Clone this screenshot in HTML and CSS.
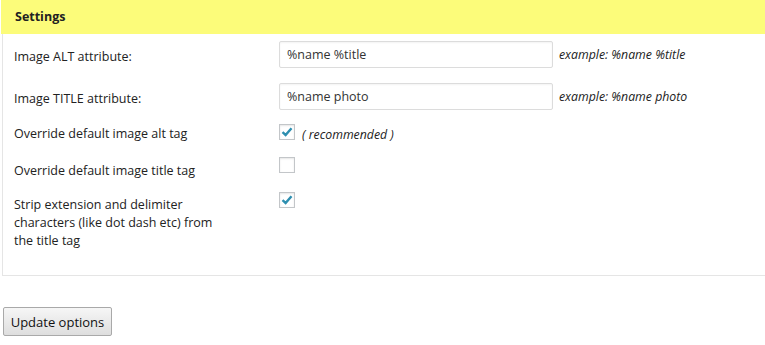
FILE: index.html
```html
<!DOCTYPE html>
<html>
<head>
<meta charset="utf-8">
<link rel="stylesheet" href="styles.css">
</head>
<body>
<div class="box">
  <div class="head">Settings</div>
  <div class="row r1">
    <div class="label">Image ALT attribute:</div>
    <div class="field"><span class="input">%name %title</span><span class="ex">example: %name %title</span></div>
  </div>
  <div class="row r2">
    <div class="label">Image TITLE attribute:</div>
    <div class="field"><span class="input">%name photo</span><span class="ex">example: %name photo</span></div>
  </div>
  <div class="row r3">
    <div class="label">Override default image alt tag</div>
    <div class="field"><span class="cb"><svg width="14" height="14" viewBox="0 0 14 14"><path d="M2.5 7.2 L5.6 10 L11.5 3.2" fill="none" stroke="#2e8fb0" stroke-width="2.4"/></svg></span><span class="rec">( recommended )</span></div>
  </div>
  <div class="row r4">
    <div class="label">Override default image title tag</div>
    <div class="field"><span class="cb"></span></div>
  </div>
  <div class="row r5">
    <div class="label">Strip extension and delimiter characters (like dot dash etc) from the title tag</div>
    <div class="field"><span class="cb"><svg width="14" height="14" viewBox="0 0 14 14"><path d="M2.5 7.2 L5.6 10 L11.5 3.2" fill="none" stroke="#2e8fb0" stroke-width="2.4"/></svg></span></div>
  </div>
</div>
<div class="actions"><button class="btn">Update options</button></div>
</body>
</html>
```
FILE: styles.css
```css
html, body { margin: 0; padding: 0; background: #fff; }
body { font-family: "Open Sans", "DejaVu Sans", sans-serif; font-size: 12.5px; color: #222; width: 765px; height: 345px; overflow: hidden; }
.box { margin-left: 2px; width: 780px; border: 1px solid #e5e5e5; border-top: none; padding-bottom: 20px; }
.head { margin-left: -2px; background: #fcfc7a; height: 34px; line-height: 33px; padding-left: 14px; font-weight: bold; font-size: 12.5px; color: #222; }
.row { display: flex; }
.label { width: 210px; padding-left: 11px; padding-right: 55px; flex: none; line-height: 18px; }
.field { display: flex; align-items: center; height: fit-content; }
.r1 { padding-top: 7px; height: 35px; }
.r1 .label, .r2 .label { padding-top: 7px; }
.r2 { padding-top: 7px; height: 33px; }
.input { display: block; box-sizing: border-box; width: 274px; height: 27px; border: 1px solid #dcdcdc; border-radius: 2px; padding-left: 7px; line-height: 25px; font-size: 12.5px; color: #333; box-shadow: inset 0 1px 2px rgba(0,0,0,0.05); }
.ex { margin-left: 6px; font-style: italic; font-size: 12.3px; color: #222; }
.cb { display: inline-flex; align-items: center; justify-content: center; box-sizing: border-box; width: 16px; height: 16px; border: 1px solid #c3c6c9; background: #fff; box-shadow: inset 0 1px 2px rgba(0,0,0,0.1); }
.rec { margin-left: 7px; font-style: italic; font-size: 12.3px; margin-top: 6px; }
.r3 { padding-top: 4px; height: 30px; }
.r3 .label { padding-top: 5px; }
.r4 { padding-top: 7px; height: 29px; }
.r4 .label { padding-top: 5px; }
.r5 { padding-top: 6px; height: 63px; }
.r5 .label { padding-top: 4px; }
.actions { padding-top: 31px; padding-left: 3px; }
.btn { font-family: "Open Sans", "DejaVu Sans", sans-serif; font-size: 13px; color: #111; width: 109px; height: 29px; padding: 0; border: 1px solid #a9a9a9; border-radius: 2px; background: linear-gradient(#f6f6f6, #dedede); }
```
